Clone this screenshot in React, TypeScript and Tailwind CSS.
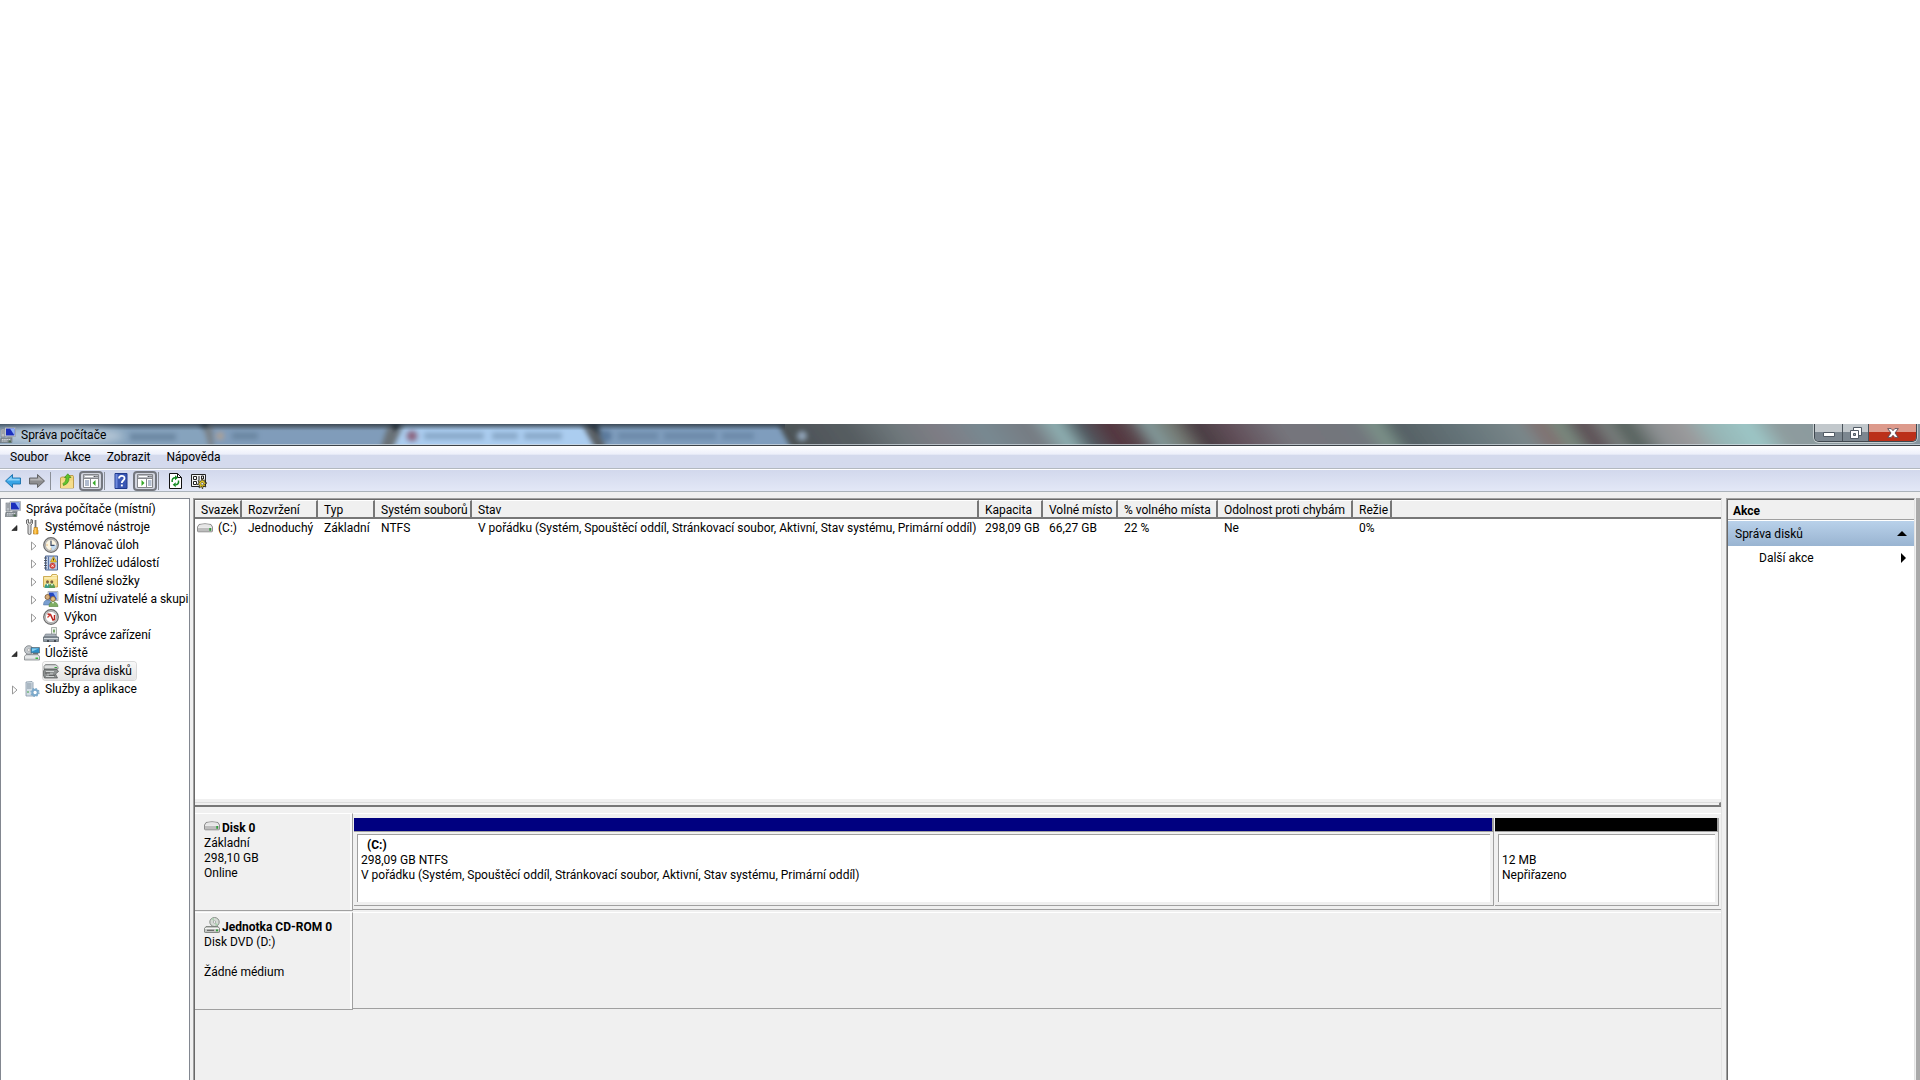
import type { ReactNode } from "react";

const Svg = ({ children }: { children: ReactNode }) => (
  <svg viewBox="0 0 16 16" className="block size-4 shrink-0" aria-hidden="true">
    {children}
  </svg>
);

const ComputerIcon = () => (
  <Svg>
    <rect x="1" y="2" width="4" height="8" fill="#b9bec4" stroke="#6f767d" strokeWidth=".6" />
    <path d="M2 4h2M2 6h2" stroke="#5b6268" strokeWidth=".6" />
    <path d="M5 .5h10.500v9H5z" fill="#d7dce0" stroke="#8b9299" strokeWidth=".6" />
    <path d="M6 1.500h8.500v7H6z" fill="#1b2fbd" />
    <path d="M10 1.500h4.500v7z" fill="#8fb2f5" />
    <path d="M8 9.500h4l1 1.500H7z" fill="#9ba1a6" />
    <path d="M1 11h11v4.500H0z" fill="#8d949a" stroke="#5d646a" strokeWidth=".5" />
    <path d="M2 12.500h8M2 14h5" stroke="#dfe3e6" strokeWidth=".8" strokeDasharray="1.500 .7" />
    <path d="M8.500 13.500h2.500v2H8.500z" fill="#4c6b50" />
  </Svg>
);

const ToolsIcon = () => (
  <Svg>
    <path d="M2.500 1v3.500L4 6v8a1.500 1.500 0 0 0 3 0V6l1.500-1.500V1L7 .5V4H4.500V.5z" fill="#d9d9d9" stroke="#6b6b6b" />
    <path d="M11.500 1v7.500" stroke="#777" strokeWidth="1.800" />
    <path d="M10 8.500h3.500v2l.5.500V15h-4.500v-4l.5-.5z" fill="#f5b02a" stroke="#a9700d" strokeWidth=".6" />
    <path d="M11.200 9v6" stroke="#ffe29a" strokeWidth=".8" />
  </Svg>
);

const ClockIcon = () => (
  <Svg>
    <circle cx="8" cy="8" r="7.300" fill="#c9c9c9" stroke="#6b6b6b" strokeWidth="1.200" />
    <circle cx="8" cy="8" r="5.600" fill="#fdf6e2" stroke="#9a9a9a" strokeWidth=".7" />
    <path d="M8 8h5.500a5.500 5.500 0 0 1-5.500 5.500z" fill="#c3dbf0" />
    <path d="M8 3.500V8.300h3.500" fill="none" stroke="#394a66" strokeWidth="1.200" />
    <path d="M3.500 8h1M8 12.500v-1" stroke="#d88b2d" />
  </Svg>
);

const EventIcon = () => (
  <Svg>
    <path d="M2.500 1h12v14h-12z" fill="#bccbe4" stroke="#4d6693" />
    <path d="M5 1.500h1v13H5z" fill="#5a76a8" />
    <path d="M1 3h3M1 5.500h3M1 8h3M1 10.500h3M1 13h3" stroke="#4a4f58" strokeWidth=".9" />
    <path d="M10.500 1.500l3 5.500h-6z" fill="#f8cf2a" stroke="#a88310" strokeWidth=".6" />
    <path d="M10.500 3.500v2" stroke="#333" />
    <circle cx="9.500" cy="10.800" r="2.700" fill="#d8443d" stroke="#b33a34" strokeWidth=".5" />
    <path d="M8.400 9.700l2.200 2.200m0-2.200l-2.200 2.200" stroke="#fff" strokeWidth=".9" />
  </Svg>
);

const SharedFolderIcon = () => (
  <Svg>
    <path d="M.5 3.500V14h14V2.500l-1-1H9l-1 2z" fill="#f6df8c" stroke="#c29a3a" strokeWidth=".8" />
    <path d="M9.500 2.500h4M1.500 5h12.500" stroke="#fff6cf" />
    <circle cx="4.500" cy="8.800" r="1.500" fill="#7d6141" />
    <circle cx="8.800" cy="8.800" r="1.500" fill="#7d6141" />
    <path d="M1.500 15c0-2.800 1-4.500 3-4.500s3 1.500 3 4.500z" fill="#3f9e86" />
    <path d="M6 15c0-2.800 1-4.500 3-4.500s3 1.500 3 4.500z" fill="#5d9a55" />
    <path d="M3.500 11l1 2 1-2zM8 11l1 2 1-2z" fill="#fff" />
  </Svg>
);

const UsersIcon = () => (
  <Svg>
    <path d="M5 .5h10v9H5z" fill="#d7dce0" stroke="#8b9299" strokeWidth=".6" />
    <path d="M6 1.500h8v7H6z" fill="#2446c0" />
    <path d="M10 1.500h4v7z" fill="#8fb2f5" />
    <circle cx="4.500" cy="6" r="2.500" fill="#d7ae7b" stroke="#75532f" strokeWidth=".8" />
    <path d="M.5 14c0-3.500 1.500-5 4-5s4 1.500 4 5z" fill="#7a9fd0" stroke="#476a99" strokeWidth=".5" />
    <circle cx="10" cy="8" r="2.400" fill="#e4c07e" stroke="#806032" strokeWidth=".8" />
    <path d="M6 15.700c0-3.500 1.500-5 4-5s5 1.500 5 5z" fill="#7fae62" stroke="#4c7a36" strokeWidth=".5" />
    <path d="M9 11l1 2 1-2z" fill="#fff" />
  </Svg>
);

const PerformanceIcon = () => (
  <Svg>
    <circle cx="8" cy="8" r="7.300" fill="#cfcfcf" stroke="#6b6b6b" strokeWidth="1.200" />
    <circle cx="8" cy="8" r="5.600" fill="#fff" stroke="#999" strokeWidth=".7" />
    <path d="M4.500 5l3 .5 2.500 5.500 1.500-.5V6" fill="none" stroke="#b8241e" strokeWidth="1.500" />
    <path d="M4.500 8.500l3-3" stroke="#d23a31" strokeWidth="1.200" />
  </Svg>
);

const DeviceIcon = () => (
  <Svg>
    <path d="M8.500.5h5v7h-5z" fill="#eef2ee" stroke="#87918a" strokeWidth=".7" />
    <path d="M10 2.500h2v3h-2z" fill="#79a86c" />
    <path d="M2.500 7h10l1.500 3H1z" fill="#aab3bb" stroke="#6b747c" strokeWidth=".6" />
    <path d="M.5 10h15v4.500H.5z" fill="#8d98a2" stroke="#535c64" strokeWidth=".7" />
    <path d="M1 11.500h14" stroke="#d4dade" />
    <path d="M4 13h2v2H4zM11 13h2v2h-2z" fill="#434b52" />
  </Svg>
);

const StorageIcon = () => (
  <Svg>
    <circle cx="4.800" cy="5" r="4.300" fill="#c3c8cc" stroke="#787e82" strokeWidth=".8" />
    <circle cx="4.800" cy="5" r="1.300" fill="#fff" stroke="#888" strokeWidth=".5" />
    <path d="M7 2.500h8.500V8H7z" fill="#2c8fc9" stroke="#59666f" strokeWidth=".7" />
    <path d="M8 3.500h6.500L8 6.500z" fill="#8ad0f0" />
    <path d="M9 8.500h5" stroke="#6a7177" />
    <path d="M2 9.500h12l1.500 2v3.500H.5v-3.500z" fill="#d3d6d8" stroke="#74797d" strokeWidth=".7" />
    <path d="M1 12h14" stroke="#f7f8f8" />
    <path d="M11.500 12.500H14V14h-2.500z" fill="#38b83e" />
  </Svg>
);

const DiskManagementIcon = () => (
  <Svg>
    <path d="M2.500 1.500h10l2.500 2v2.500H1V3.500z" fill="#c4c7c7" stroke="#6b6f6f" strokeWidth=".7" />
    <path d="M1.500 4h13" stroke="#f3f3f3" />
    <path d="M11.500 4.500h2.500" stroke="#37a33d" />
    <path d="M1 6.500h13l1.500 2-3 2.500 2 4H1.500L0 11z" fill="#8c9090" stroke="#4d5151" strokeWidth=".7" />
    <path d="M3 8.500h8M4 11h6M3 13.500h8" stroke="#d9dcdc" strokeWidth=".9" />
    <path d="M2 10h5M6 12.300h6" stroke="#444" strokeWidth=".7" />
  </Svg>
);

const ServicesIcon = () => (
  <Svg>
    <path d="M2 1l6-.5 1 1V15H2z" fill="#d3dde5" stroke="#8496a5" strokeWidth=".8" />
    <path d="M3 3h4.500M3 5h4.500M3 7h4.500" stroke="#6f8291" strokeWidth=".8" />
    <path d="M3 11h2" stroke="#42a34b" />
    <circle cx="11" cy="11.500" r="2.700" fill="none" stroke="#7daacb" strokeWidth="2" />
    <circle cx="11" cy="11.500" r="4" fill="none" stroke="#7daacb" strokeWidth="1.300" strokeDasharray="1.570 1.570" />
    <circle cx="11" cy="11.500" r="1.300" fill="#fff" />
  </Svg>
);

const DriveIcon = () => (
  <Svg>
    <path d="M2 4.500Q8 3 14 4.500L15.500 7v4q0 .8-1 .8h-13q-1 0-1-.8V7z" fill="#d5d5d5" stroke="#777" strokeWidth=".8" />
    <path d="M2.500 5Q8 3.700 13.500 5l1 2h-13z" fill="#e6e6e6" />
    <path d="M1 7.500h14V11H1z" fill="#bdbdbd" />
    <path d="M1 7.500h14" stroke="#f8f8f8" strokeWidth=".7" />
    <path d="M12.300 8h1.700v2.700h-1.700z" fill="#2f9f3a" />
  </Svg>
);

const CdDriveIcon = () => (
  <Svg>
    <ellipse cx="10.500" cy="5" rx="4.700" ry="4.500" fill="#d6dbd6" stroke="#7e847e" strokeWidth=".9" />
    <path d="M10.500 5L7.500 1.800 9.500.8zM10.500 5l3.500 2.500-2 1.500z" fill="#a9cfae" />
    <circle cx="10.500" cy="5" r="1.200" fill="#fff" stroke="#888" strokeWidth=".6" />
    <path d="M2 9.500h12l1.500 2V15q0 .5-1 .5h-13q-1 0-1-.5v-3.500z" fill="#c3c6c3" stroke="#6f736f" strokeWidth=".8" />
    <path d="M1 11.500h14" stroke="#f4f4f4" />
    <path d="M3 13.300h7" stroke="#555" />
    <path d="M12 12.500h2v1.700h-2z" fill="#2f9f3a" />
  </Svg>
);

const BackIcon = () => (
  <Svg>
    <path d="M7.500 1.500v3.500h8v6h-8v3.500L.5 8z" fill="#39a5e6" stroke="#1a6fab" strokeWidth=".9" strokeLinejoin="round" />
    <path d="M6.700 3.500v2.300h8V7.500H2z" fill="#8fd3f8" />
  </Svg>
);

const ForwardIcon = () => (
  <Svg>
    <path d="M8.500 1.500v3.500h-8v6h8v3.500L15.500 8z" fill="#8d8d8f" stroke="#5c5c5e" strokeWidth=".9" strokeLinejoin="round" />
    <path d="M9.300 3.500v2.300h-8V7.500H14z" fill="#b4b4b6" />
  </Svg>
);

const UpFolderIcon = () => (
  <Svg>
    <path d="M1.500 5l1-1H7l1-1.500h6l.5 1V15h-13z" fill="#f1d57c" stroke="#b48f39" strokeWidth=".8" />
    <path d="M2 7.500h12V15H2z" fill="#f6dd8c" />
    <path d="M4 10.500q3.500-2 3-6H5.500L8.800.8 12 4.500h-2q.5 6-5.500 8z" fill="#5fc22c" stroke="#2f8613" strokeWidth=".6" />
  </Svg>
);

const PaneIcon = ({ side }: { side: "left" | "right" }) => (
  <Svg>
    <path d="M.5 1.500h15v13H.5z" fill="#fff" stroke="#85878c" />
    <path d="M1 2h14v3H1z" fill="#b9bbc1" />
    <path d="M2 3.500h8" stroke="#fff" />
    <path d="M11 3.500h3.500" stroke="#55575c" strokeDasharray="1 .5" />
    <path d="M1 5.500h14" stroke="#85878c" />
    {side === "left" ? (
      <>
        <path d="M7.500 6v8" stroke="#85878c" />
        <path d="M2 8h4M2 10h4M2 12h4" stroke="#657a9e" />
        <path d="M12.500 7v6l-3-3z" fill="#35a927" />
      </>
    ) : (
      <>
        <path d="M9.500 6v8" stroke="#85878c" />
        <path d="M11 8h3.500M11 10h3.500M11 12h3.500" stroke="#657a9e" />
        <path d="M4.500 7v6l3-3z" fill="#35a927" />
      </>
    )}
  </Svg>
);

const HelpIcon = () => (
  <Svg>
    <path d="M2 .5h12v15H2z" fill="#3a57b4" stroke="#203a8c" />
    <path d="M2.500 1h2v14h-2z" fill="#6f8add" />
    <path d="M6 5.500C6 2 11.500 2 11.500 5.200c0 2.300-2.700 2.300-2.700 4.800" fill="none" stroke="#fff" strokeWidth="1.800" />
    <path d="M7.900 11.500h1.900v1.900H7.900z" fill="#fff" />
  </Svg>
);

const RefreshIcon = () => (
  <Svg>
    <path d="M2.500.5h8l4 4v11h-12z" fill="#fff" stroke="#111" />
    <path d="M10.500.5v4h4" fill="none" stroke="#111" />
    <path d="M5.200 9c-.5-3 1-4.300 3-4.300M11.500 7.500c.5 3-1 4.300-3 4.300" fill="none" stroke="#138a22" strokeWidth="1.500" />
    <path d="M8 2.200v5l3-2.500zM8.700 9.300v5l-3-2.500z" fill="#138a22" />
  </Svg>
);

const SettingsIcon = () => (
  <Svg>
    <path d="M.5 1.500h14v12H.5z" fill="#f3f3f3" stroke="#222" />
    <path d="M2.500 3.500h3v3h-3zM2.500 8.500h3v3h-3z" fill="#fff" stroke="#222" />
    <path d="M7 4h2M7 6h2M10.500 3h2v3h-2zM7 9h2" stroke="#222" fill="none" />
    <path d="M11 5.500l1 2.500 2.500-1.500-1 2.700 2.500.8-2.500 1.300 1.500 2.700-2.800-1L11.500 16l-1-2.500L8 15l.8-3L6 11.500l2.500-1.500L7 7.500l3 .8z" fill="#f2d321" stroke="#222" strokeWidth=".7" />
    <circle cx="11.200" cy="10.800" r="1.300" fill="#fff" stroke="#222" strokeWidth=".6" />
  </Svg>
);

const GlassBackdrop = () => (
  <svg
    className="absolute inset-0 size-full"
    viewBox="0 0 1920 22"
    preserveAspectRatio="xMinYMin slice"
    aria-hidden="true"
  >
    <defs>
      <linearGradient id="glass" gradientUnits="userSpaceOnUse" x1="0" y1="0" x2="1920" y2="0" gradientTransform="skewX(35)">
        <stop offset="0" stopColor="#8a9299" />
        <stop offset=".4" stopColor="#4b5155" />
        <stop offset=".44" stopColor="#565d61" />
        <stop offset=".465" stopColor="#6f787c" />
        <stop offset=".485" stopColor="#7e7c84" />
        <stop offset=".51" stopColor="#788991" />
        <stop offset=".535" stopColor="#767b82" />
        <stop offset=".55" stopColor="#8fb1b3" />
        <stop offset=".562" stopColor="#515960" />
        <stop offset=".577" stopColor="#53343d" />
        <stop offset=".587" stopColor="#5b4a50" />
        <stop offset=".597" stopColor="#82999a" />
        <stop offset=".61" stopColor="#737872" />
        <stop offset=".622" stopColor="#4a3d43" />
        <stop offset=".64" stopColor="#62505a" />
        <stop offset=".665" stopColor="#75747b" />
        <stop offset=".705" stopColor="#72777d" />
        <stop offset=".716" stopColor="#7b9289" />
        <stop offset=".727" stopColor="#566165" />
        <stop offset=".76" stopColor="#66757a" />
        <stop offset=".79" stopColor="#7a878a" />
        <stop offset=".802" stopColor="#807070" />
        <stop offset=".812" stopColor="#788a7f" />
        <stop offset=".824" stopColor="#5c4e54" />
        <stop offset=".836" stopColor="#777d7b" />
        <stop offset=".846" stopColor="#56615d" />
        <stop offset=".86" stopColor="#8b8f91" />
        <stop offset=".875" stopColor="#9a999b" />
        <stop offset=".89" stopColor="#96b5b5" />
        <stop offset=".91" stopColor="#9cc6c6" />
        <stop offset=".925" stopColor="#8e9c9e" />
        <stop offset="1" stopColor="#84939d" />
      </linearGradient>
      <linearGradient id="shade" x1="0" y1="0" x2="0" y2="1">
        <stop offset="0" stopColor="#2d3a47" stopOpacity=".75" />
        <stop offset=".3" stopColor="#2d3a47" stopOpacity="0" />
      </linearGradient>
      <filter id="soft" filterUnits="userSpaceOnUse" x="-40" y="-20" width="1000" height="70">
        <feGaussianBlur stdDeviation="2.500" />
      </filter>
      <filter id="softer" filterUnits="userSpaceOnUse" x="-60" y="-30" width="2040" height="90">
        <feGaussianBlur stdDeviation="4" />
      </filter>
    </defs>
    <rect x="-40" y="-20" width="2000" height="62" fill="url(#glass)" filter="url(#softer)" />
    <g filter="url(#soft)">
      <path d="M-10-2h212l8 28H-10z" fill="#86a3bd" />
      <path d="M212 2h176l-8 24H214z" fill="#809cba" />
      <path d="M196-4h14l-6 10zM388-4h16l-8 12z" fill="#212a33" />
      <path d="M404 0h178l14 26H392z" fill="#abcdf0" />
      <path d="M598 0h180l14 26H606z" fill="#7f9dbd" />
      <path d="M582-4h16l4 16z" fill="#2b3641" />
      <circle cx="412" cy="12" r="6" fill="#8d6784" />
      <circle cx="220" cy="12" r="4" fill="#a9a096" />
      <circle cx="606" cy="12" r="6" fill="#5b7a9d" />
      <circle cx="802" cy="12" r="5" fill="#8fa3b8" />
      <path d="M424 12h60M492 12h26M524 12h38" stroke="#88a7c8" strokeWidth="7" />
      <path d="M232 12h26M130 13h46" stroke="#6b86a1" strokeWidth="7" />
      <path d="M618 12h40M664 12h52M722 12h32" stroke="#6c89a9" strokeWidth="7" />
    </g>
    <rect width="785" height="22" fill="url(#shade)" />
    <ellipse cx="58" cy="12" rx="66" ry="9" fill="#dfe6ec" opacity=".55" filter="url(#softer)" />
    <path d="M0 20.500h1920" stroke="#d5dde3" opacity=".7" />
  </svg>
);

const TitleBar = () => (
  <header className="relative flex h-[22px] items-start justify-between overflow-hidden border-b border-[#3c4248]">
    <GlassBackdrop />
    <div className="relative flex h-full items-center gap-[5px]">
      <ComputerIcon />
      <h1>Správa počítače</h1>
    </div>
    <div className="relative mr-[3px] flex h-[18px] overflow-hidden rounded-b-[5px] border border-t-0 border-[#3f484f] shadow-[0_0_0_1px_rgba(255,255,255,0.5)]">
      <button aria-label="Minimalizovat" className="flex w-7 items-center justify-center border-r border-[#4a535b] bg-linear-to-b from-[#c2c8cc] from-45% to-[#7c8790] to-45%">
        <svg viewBox="0 0 12 5" className="mt-1 h-[5px] w-3" aria-hidden="true">
          <path d="M.5.5h11v4H.5z" fill="#fff" stroke="#515a64" />
        </svg>
      </button>
      <button aria-label="Obnovit z maximalizace" className="flex w-[26px] items-center justify-center border-r border-[#4a535b] bg-linear-to-b from-[#c2c8cc] from-45% to-[#7c8790] to-45%">
        <svg viewBox="0 0 12 12" className="size-3" aria-hidden="true">
          <path d="M3.500.5h8v8h-8z" fill="#fff" stroke="#515a64" />
          <path d="M.5 3.500h8v8h-8z" fill="#fff" stroke="#515a64" />
          <path d="M3.500 6.500h2v2h-2z" fill="#9aa4ac" stroke="#515a64" />
        </svg>
      </button>
      <button aria-label="Zavřít" className="flex w-[47px] items-center justify-center bg-linear-to-b from-[#dd9a8c] from-45% to-[#bb3019] to-45%">
        <svg viewBox="0 0 12 10" className="h-2.5 w-3" aria-hidden="true">
          <path d="M.7.600h3.500L6 2.700 7.800.6h3.500L8 5l3.300 4.400H7.800L6 7.300 4.200 9.400H.7L4 5z" fill="#fff" stroke="#5a4a55" strokeWidth=".9" />
        </svg>
      </button>
    </div>
  </header>
);

const MenuBar = () => (
  <nav className="flex h-[23px] items-center gap-4 border-b border-[#b2b8bf] bg-linear-to-b from-white via-[#eceffa] via-38% to-[#d4daed] to-40% px-2.5">
    {["Soubor", "Akce", "Zobrazit", "Nápověda"].map((m) => (
      <button key={m}>{m}</button>
    ))}
  </nav>
);

const ToolButton = ({ label, icon }: { label: string; icon: ReactNode }) => (
  <button aria-label={label} className="flex size-6 items-center justify-center">
    {icon}
  </button>
);

const ToggleButton = ({ label, icon }: { label: string; icon: ReactNode }) => (
  <button
    aria-label={label}
    aria-pressed="true"
    className="flex h-5 w-6 items-center justify-center rounded-[4px] border-2 border-[#74777f] bg-[#d2d5df]"
  >
    {icon}
  </button>
);

const ToolGroup = ({ children }: { children: ReactNode }) => (
  <div className="ml-px flex items-center">
    <div className="mr-1 h-[18px] w-px bg-[#8b8f97]" />
    {children}
  </div>
);

const Toolbar = () => (
  <div role="toolbar" className="flex h-[23px] items-center border-t border-b border-t-white border-b-[#abb3ba] bg-linear-to-b from-[#d2d8ec] to-[#e3e8f7] pl-px">
    <ToolButton label="Zpět" icon={<BackIcon />} />
    <ToolButton label="Vpřed" icon={<ForwardIcon />} />
    <ToolGroup>
      <ToolButton label="O úroveň výš" icon={<UpFolderIcon />} />
      <ToggleButton label="Zobrazit strom konzoly" icon={<PaneIcon side="left" />} />
    </ToolGroup>
    <ToolGroup>
      <ToolButton label="Nápověda" icon={<HelpIcon />} />
      <ToggleButton label="Zobrazit podokno akcí" icon={<PaneIcon side="right" />} />
    </ToolGroup>
    <ToolGroup>
      <ToolButton label="Aktualizovat" icon={<RefreshIcon />} />
      <ToolButton label="Nastavení" icon={<SettingsIcon />} />
    </ToolGroup>
  </div>
);

type Node = { label: string; icon: ReactNode; level: 0 | 1 | 2; state?: "open" | "closed"; selected?: boolean };

const nodes: Node[] = [
  { label: "Správa počítače (místní)", icon: <ComputerIcon />, level: 0 },
  { label: "Systémové nástroje", icon: <ToolsIcon />, level: 1, state: "open" },
  { label: "Plánovač úloh", icon: <ClockIcon />, level: 2, state: "closed" },
  { label: "Prohlížeč událostí", icon: <EventIcon />, level: 2, state: "closed" },
  { label: "Sdílené složky", icon: <SharedFolderIcon />, level: 2, state: "closed" },
  { label: "Místní uživatelé a skupiny", icon: <UsersIcon />, level: 2, state: "closed" },
  { label: "Výkon", icon: <PerformanceIcon />, level: 2, state: "closed" },
  { label: "Správce zařízení", icon: <DeviceIcon />, level: 2 },
  { label: "Úložiště", icon: <StorageIcon />, level: 1, state: "open" },
  { label: "Správa disků", icon: <DiskManagementIcon />, level: 2, selected: true },
  { label: "Služby a aplikace", icon: <ServicesIcon />, level: 1, state: "closed" },
];

const indent = { 0: "pl-1", 1: "pl-2", 2: "pl-[27px]" };

const Tree = () => (
  <ul role="tree" className="w-[190px] shrink-0 overflow-hidden border border-b-0 border-[#828790] bg-white pt-px">
    {nodes.map((n) => (
      <li key={n.label} role="treeitem" aria-selected={!!n.selected} className={`flex h-[18px] items-center whitespace-nowrap ${indent[n.level]}`}>
        {n.level > 0 && (
          <span className="flex w-[15px] shrink-0 pl-0.5">
            {n.state && (
              <svg viewBox="0 0 8 10" className="mt-0.5 h-2.5 w-2" aria-hidden="true">
                {n.state === "open" ? (
                  <path d="M6 2.500v5H.8z" fill="#333" stroke="#111" strokeWidth=".6" />
                ) : (
                  <path d="M1.500 1v8L6 5z" fill="#fff" stroke="#8f8f8f" strokeWidth=".9" />
                )}
              </svg>
            )}
          </span>
        )}
        <span
          className={
            n.selected
              ? "flex h-[18px] items-center gap-[5px] rounded-[3px] bg-linear-to-b from-[#f8f8f8] to-[#e5e5e5] pr-1 shadow-[0_0_0_1px_#d9d9d9]"
              : "flex items-center gap-[5px]"
          }
        >
          {n.icon}
          {n.label}
        </span>
      </li>
    ))}
  </ul>
);

const columns = [
  { name: "Svazek", value: "(C:)", width: "w-[47px]" },
  { name: "Rozvržení", value: "Jednoduchý", width: "w-[76px]" },
  { name: "Typ", value: "Základní", width: "w-[57px]" },
  { name: "Systém souborů", value: "NTFS", width: "w-[97px]" },
  { name: "Stav", value: "V pořádku (Systém, Spouštěcí oddíl, Stránkovací soubor, Aktivní, Stav systému, Primární oddíl)", width: "w-[507px]" },
  { name: "Kapacita", value: "298,09 GB", width: "w-16" },
  { name: "Volné místo", value: "66,27 GB", width: "w-[75px]" },
  { name: "% volného místa", value: "22 %", width: "w-[100px]" },
  { name: "Odolnost proti chybám", value: "Ne", width: "w-[135px]" },
  { name: "Režie", value: "0%", width: "w-[39px]" },
];

const VolumeTable = () => (
  <div className="h-[299px] overflow-hidden bg-white">
    <table className="w-full table-fixed border-separate border-spacing-0 text-left whitespace-nowrap">
      <thead>
        <tr className="h-[19px] bg-[#f0f0f0]">
          {columns.map((c) => (
            <th key={c.name} scope="col" className={`${c.width} border-t border-r-2 border-b-2 border-t-white border-r-[#777] border-b-[#777] pl-1.5 leading-[14px] font-normal align-bottom`}>
              {c.name}
            </th>
          ))}
          <td className="border-t border-b-2 border-t-white border-b-[#777]" />
        </tr>
      </thead>
      <tbody>
        <tr className="h-[18px]">
          {columns.map((c, i) => (
            <td key={c.name} className={i === 0 ? "pl-0.5" : "pl-1.5"}>
              {i === 0 ? (
                <span className="flex items-center gap-[5px]">
                  <DriveIcon />
                  {c.value}
                </span>
              ) : (
                c.value
              )}
            </td>
          ))}
          <td />
        </tr>
      </tbody>
    </table>
  </div>
);

const DiskHead = ({ icon, name, lines }: { icon: ReactNode; name: string; lines: string[] }) => (
  <div className="h-[98px] w-[158px] shrink-0 border-t border-r border-b border-t-white border-r-[#a0a0a0] border-b-[#a0a0a0] pt-[7px] pl-[9px] leading-[15px] shadow-[inset_-3px_0_0_-1px_#fafafa]">
    <h2 className="flex items-end gap-0.5 font-bold">
      <span className="-mt-1 mb-0.5">{icon}</span>
      {name}
    </h2>
    {lines.map((l, i) => (
      <p key={i} className="min-h-[15px]">
        {l}
      </p>
    ))}
  </div>
);

const Partition = ({ bar, basis, title, lines }: { bar: string; basis: string; title: string; lines: string[] }) => (
  <div className={`flex flex-col ${basis}`}>
    <div className={`h-[14px] border-r-2 border-b border-[#a0a0a0] ${bar}`} />
    <div className="flex-1 border-r border-b border-[#a0a0a0] pt-0.5 pr-[3px] pb-[3px] pl-[3px]">
      <div className="h-full border-t border-l border-[#a0a0a0] bg-white pt-[3px] pl-[3px] leading-[15px]">
        <p className="min-h-[15px] pl-1.5 font-bold">{title}</p>
        {lines.map((l) => (
          <p key={l}>{l}</p>
        ))}
      </div>
    </div>
  </div>
);

const DiskView = () => (
  <div className="flex-1 bg-[#f0f0f0] pt-1.5">
    <section className="flex h-[99px]">
      <DiskHead icon={<DriveIcon />} name="Disk 0" lines={["Základní", "298,10 GB", "Online"]} />
      <div className="flex h-[97px] min-w-0 flex-1 gap-px border-t border-b border-t-white border-b-[#a0a0a0] pt-1 pr-0.5 pb-[3px] pl-px">
        <Partition
          bar="bg-[#000080]"
          basis="min-w-0 flex-1"
          title="(C:)"
          lines={[
            "298,09 GB NTFS",
            "V pořádku (Systém, Spouštěcí oddíl, Stránkovací soubor, Aktivní, Stav systému, Primární oddíl)",
          ]}
        />
        <Partition bar="bg-black" basis="w-[224px]" title="" lines={["12 MB", "Nepřiřazeno"]} />
      </div>
    </section>
    <section className="flex h-[99px]">
      <DiskHead icon={<CdDriveIcon />} name="Jednotka CD-ROM 0" lines={["Disk DVD (D:)", "", "Žádné médium"]} />
      <div className="h-[97px] flex-1 border-t border-b border-t-white border-b-[#a0a0a0]" />
    </section>
  </div>
);

const sunken = "border-t border-l border-r border-t-[#a0a0a0] border-l-[#a0a0a0] border-r-[#e3e3e3]";

const ActionsPane = () => (
  <aside className={`w-[189px] shrink-0 bg-white ${sunken}`}>
    <div className="h-full border-t border-l border-[#696969]">
      <h2 className="flex h-5 items-center border-b border-[#a0a0a0] bg-[#f0f0f0] pt-0.5 pl-[5px] font-bold">Akce</h2>
      <button className="mt-px flex h-[25px] w-full items-center justify-between bg-linear-to-b from-[#b9d1ea] to-[#99b4d1] pr-[7px] pl-[7px]">
        Správa disků
        <svg viewBox="0 0 10 5" className="h-[5px] w-2.5" aria-hidden="true">
          <path d="M5 0l5 5H0z" />
        </svg>
      </button>
      <button className="flex h-6 w-full items-center justify-between pr-2 pl-[31px]">
        Další akce
        <svg viewBox="0 0 5 10" className="h-2.5 w-[5px]" aria-hidden="true">
          <path d="M0 0l5 5-5 5z" />
        </svg>
      </button>
    </div>
  </aside>
);

export default function App() {
  return (
    <div className="flex min-h-screen flex-col bg-white pt-[424px] font-[Roboto,sans-serif] text-[12px] leading-4 text-black">
      <TitleBar />
      <MenuBar />
      <Toolbar />
      <main className="flex flex-1 bg-[#f0f0f0] pt-1.5">
        <Tree />
        <div className={`ml-[3px] min-w-0 flex-1 ${sunken}`}>
          <div className="flex h-full flex-col border-t border-l border-[#696969]">
            <VolumeTable />
            <div className="mt-[3px] h-[5px] border-t border-r-2 border-b-2 border-t-[#dcdcdc] border-r-[#808080] border-b-[#777]" />
            <DiskView />
          </div>
        </div>
        <div className="w-1 bg-[#f0f0f0]" />
        <ActionsPane />
        <div className="ml-px w-1 bg-[#a9a9a9]" />
      </main>
    </div>
  );
}
